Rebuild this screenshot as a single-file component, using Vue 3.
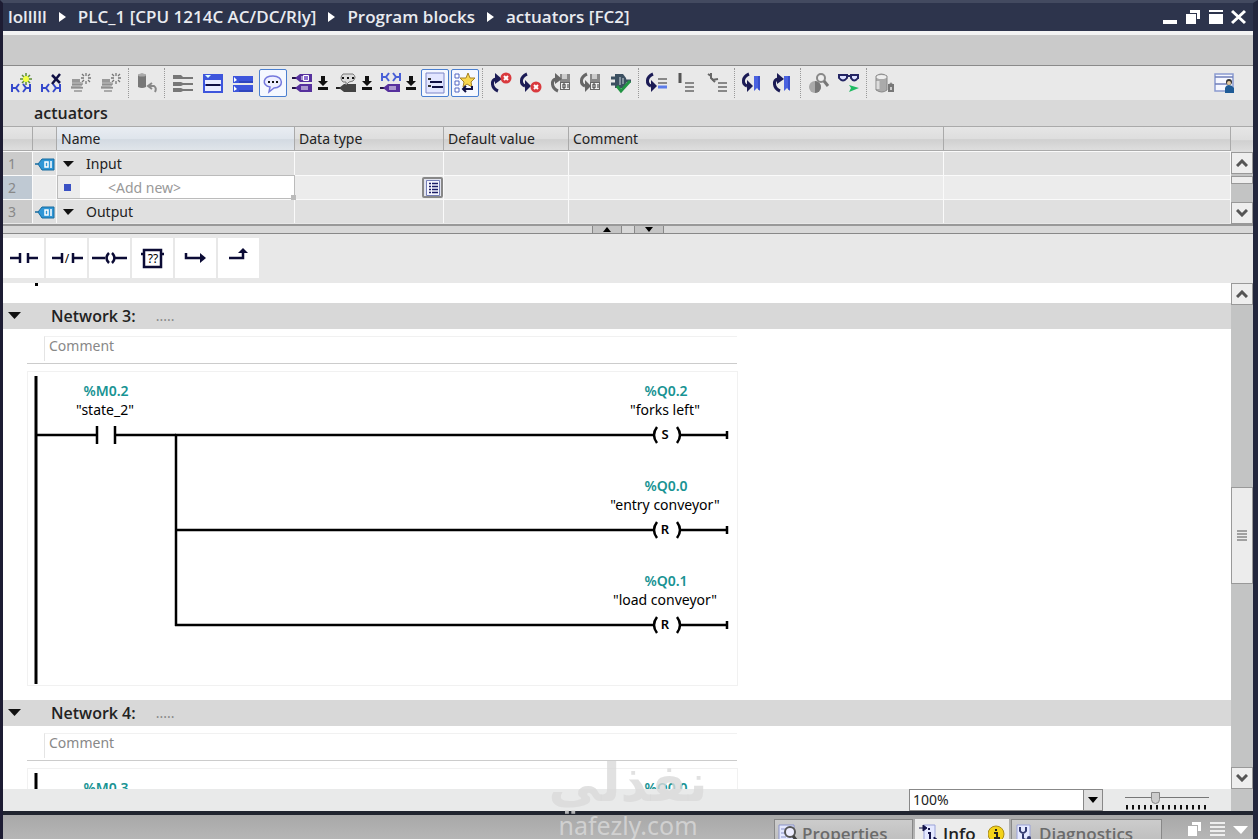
<script setup>
import { ref } from "vue";

const crumbs = ["lolllll", "PLC_1 [CPU 1214C AC/DC/Rly]", "Program blocks", "actuators [FC2]"];

const zoom = ref("100%");
const slider = ref(35);

// Shared pieces of the toolbar glyphs, all on a 20x20 grid
const contacts = (y, c) =>
  `<path d="M1 ${y}v8M1 ${y + 4}h4M8 ${y}l-3 4 3 4M12 ${y}l3 4-3 4M15 ${y + 4}h4M19 ${y}v8" fill="none" stroke="${c}" stroke-width="2"/>`;
const tag = (y, c) =>
  `<path d="M-1 ${y + 4}h6" stroke="#221244" stroke-width="2"/><path d="M2 ${y + 4}l5-4h12v8H7z" fill="${c}"/><path d="M8 ${y + 3}h7M8 ${y + 5}h7" stroke="#fff"/>`;
const rays = `<path d="M15 0v3M15 8v3M10 5h3M17 5h3M11 1l2 2M17 7l2 2M19 1l-2 2M11 9l2-2" stroke="#777" stroke-width="1.3"/>`;
const rows = `<path d="M1 6h8v3H1z" fill="#999"/><path d="M1 9h9l2 1v2H1zM0 13h9l3 1v1H0zM3 17h8v2H3z" fill="#aaa"/><path d="M1 12h10M0 15h12" stroke="#777"/>`;
const redX = (x, y) =>
  `<circle cx="${x}" cy="${y}" r="5.500" fill="#d93a3e"/><path d="M${x - 2} ${y - 2}l4 4m0-4l-4 4" stroke="#fff" stroke-width="2"/>`;
const up = (c) =>
  `<path d="M7 18C0 15 0 7 5 6" fill="none" stroke="${c}" stroke-width="3"/><path d="M4 0l7 6-7 5z" fill="${c}"/>`;
const down = (c) =>
  `<path d="M6 1C-1 4-1 11 4 13" fill="none" stroke="${c}" stroke-width="3"/><path d="M4 7l6 6-6 6z" fill="${c}"/>`;
const disk = `<path d="M9 1h10v16H9z" fill="#888"/><path d="M11 1h5v5h-5z" fill="#ccc"/><path d="M9 9h10v8H9z" fill="#666"/><path d="M10 10h8v6h-8z" fill="#eee"/><path d="M12 11h2v4h-2zM17 11v4" fill="none" stroke="#333"/>`;
const flag = `<path d="M11 3h6v15l-3-3-3 3z" fill="#4a62e0"/><path d="M16 3v14" stroke="#243bb5"/>`;
const lines = (x, y, c = "#888") =>
  `<path d="M${x} ${y}h9M${x} ${y + 4}h9M${x} ${y + 8}h9" stroke="${c}" stroke-width="2"/>`;

const icons = {
  insertNetwork:
    contacts(11, "#3448cc") +
    `<path d="M15 0v12M9 6h12M11 2l8 8M19 2l-8 8" stroke="#5c8f35" stroke-width="1.5"/><circle cx="15" cy="6" r="3" fill="#f2ff45"/>`,
  deleteNetwork: contacts(11, "#3448cc") + `<path d="M11 2l8 8M19 1l-8 10" stroke="#101044" stroke-width="2.5"/>`,
  insertRow: rows + rays,
  addRow: rows + rays,
  reset: `<path d="M1 2q4-3 8 0v12q-4 2-8 0z" fill="#777"/><ellipse cx="5" cy="2" rx="4" ry="1.5" fill="#aaa"/><path d="M12 13h5q3 2 1 6M15 10l-4 3 4 3" fill="none" stroke="#888" stroke-width="2"/>`,
  rows: `<path d="M0 2h8l2 2h10v2H10L8 6H0zM0 9h8l2 1h10v2H10L8 13H0zM0 15h8l2 1h10v2H10L8 19H0z" fill="#777"/>`,
  openAll: `<path d="M0 1h20v19H0z" fill="#3d55dc"/><path d="M2 2h6l-3 3z" fill="#dff"/><path d="M2 7h16v4H2zM2 13h16v5H2z" fill="#e9ecff"/><path d="M3 12h14" stroke="#101044" stroke-width="2"/>`,
  closeAll: `<path d="M0 3h20v7H0zM0 12h20v7H0z" fill="#3d55dc"/><path d="M1 4l3 3-3 2zM1 13l3 3-3 2z" fill="#fff"/><path d="M6 9h14M6 18h14" stroke="#20369f"/>`,
  comment: `<path d="M10 3c11 0 11 12 1 12l-5 4 1-5C-2 12 0 3 10 3z" fill="#eeefff" stroke="#7478dd" stroke-width="1.5"/><path d="M5 8h2v2H5zM9 8h2v2H9zM13 8h2v2h-2z" fill="#111"/>`,
  operands: tag(1, "#56309d") + tag(11, "#56309d") + `<path d="M10.500 2.500h5v5h-5z" fill="#8b6cd0" stroke="#fff"/>`,
  tagInfo: `<path d="M-1 15h6" stroke="#222" stroke-width="2"/><path d="M2 15l5-4h12v8H7z" fill="#444"/><path d="M6 1h10q4 3 0 7l-4 1-3 3V9H6q-4-4 0-8z" fill="#ddd" stroke="#777"/><path d="M5 4h2v2H5zM10 4h2v2h-2zM15 4h2v2h-2z" fill="#111"/>`,
  symbols: contacts(0, "#4960d7") + tag(11, "#56309d"),
  networkComments: `<path d="M1 0h18v20H1z" fill="#e3e6ff" stroke="#7d86c8"/><path d="M3 6h3M3 13h3" stroke="#333" stroke-width="2"/><path d="M5 9h12M7 14h11" stroke="#101044" stroke-width="2"/>`,
  favorites: `<path d="M0 1h4v4H0zM0 8h4v4H0zM0 15h4v4H0z" fill="#fff" stroke="#5367c2"/><path d="M13 0l2 5h5l-4 4 1 5-5-3-4 3 1-5-4-4h6z" fill="#f9d74f" stroke="#a68225"/><path d="M17 13v3H9M11 13l-3 3 3 3" fill="none" stroke="#101044" stroke-width="2"/>`,
  prevError: up("#1b1b55") + redX(15, 5),
  nextError: down("#1b1b55") + redX(15, 14),
  upload: disk + up("#666"),
  download: disk + down("#666"),
  consistency: `<path d="M0 5h5M0 11h5M15 8h5" stroke="#3c5061" stroke-width="3"/><path d="M4 1h8q7 7 0 14H4z" fill="#3c5061"/><path d="M9 4v8M12 5v6" stroke="#cdd7dd"/><path d="M6 13l4 5 9-10" fill="none" stroke="#229444" stroke-width="3"/>`,
  goto: down("#1b1b55") + lines(11, 6) + `<path d="M11 14h9" stroke="#5b7bea" stroke-width="3"/>`,
  absolute: `<path d="M3 0v10" stroke="#555" stroke-width="3"/>` + lines(8, 10),
  relative: `<path d="M1 1l3 2M4 0v5l4 4M5 7l6-1" fill="none" stroke="#666" stroke-width="2"/>` + lines(11, 10),
  nextMark: down("#1b1b55") + flag,
  prevMark: up("#1b1b55") + flag,
  inspect: `<circle cx="6" cy="14" r="6" fill="#aaa"/><path d="M6 8a6 6 0 010 12z" fill="#777"/><circle cx="12" cy="5" r="4" fill="#eee" stroke="#888" stroke-width="2"/><path d="M15 8l4 5" stroke="#777" stroke-width="3"/>`,
  monitor: `<path d="M0 2h8v3q-4 5-8 0zM12 2h7v3q-4 5-7 0zM8 3h4M19 2v4" fill="#dce0ff" stroke="#242564" stroke-width="2"/><path d="M10 12l10 3-10 4 2-4z" fill="#20bb62"/>`,
  snapshot: `<path d="M1 3q5-4 11 0v14q-5 4-11 0z" fill="#aaa" stroke="#888"/><ellipse cx="6.5" cy="4" rx="5" ry="2" fill="#eee"/><path d="M3 8v8" stroke="#ddd" stroke-width="3"/><path d="M13 11h6v8h-6z" fill="#777"/><path d="M14 12q2-4 4 0" fill="none" stroke="#777"/><path d="M15 14h2v3h-2z" fill="#ccc"/>`,
};

const toolGroups = [
  [{ icon: "insertNetwork" }, { icon: "deleteNetwork" }, { icon: "insertRow" }, { icon: "addRow" }],
  [{ icon: "reset" }],
  [
    { icon: "rows" },
    { icon: "openAll" },
    { icon: "closeAll" },
    { icon: "comment", on: true },
    { icon: "operands", menu: true },
    { icon: "tagInfo", menu: true },
    { icon: "symbols", menu: true },
    { icon: "networkComments", on: true },
    { icon: "favorites", on: true },
  ],
  [{ icon: "prevError" }, { icon: "nextError" }, { icon: "upload" }, { icon: "download" }, { icon: "consistency" }],
  [{ icon: "goto" }, { icon: "absolute" }, { icon: "relative" }],
  [{ icon: "nextMark" }, { icon: "prevMark" }],
  [{ icon: "inspect" }, { icon: "monitor" }],
  [{ icon: "snapshot" }],
];

const palette = [
  { name: "Normally open contact", line: "M1 10h10M11 5v10M19 5v10M19 10h10" },
  { name: "Normally closed contact", line: "M0 10h10M10 5v10M21 5v10M21 10h10", label: "/" },
  { name: "Assignment", line: "M-3 10h13M14 5q-5 5 0 10M17 5q5 5 0 10M20 10h12" },
  { name: "Empty box", line: "M6 2h17v17H6zM3 6h3M23 6h3", label: "??" },
  { name: "Open branch", line: "M5 5v5h15", head: "M19 5l6 5-6 5z" },
  { name: "Close branch", line: "M5 10h14V3", head: "M14 5l5-5 5 5z" },
];

const networks = [
  {
    title: "Network 3:",
    contact: { address: "%M0.2", name: '"state_2"' },
    coils: [
      { address: "%Q0.2", name: '"forks left"', type: "S" },
      { address: "%Q0.0", name: '"entry conveyor"', type: "R" },
      { address: "%Q0.1", name: '"load conveyor"', type: "R" },
    ],
  },
  {
    title: "Network 4:",
    contact: { address: "%M0.3" },
    coils: [{ address: "%Q0.0" }],
  },
];

const rungY = (i) => 63 + i * 95;
</script>

<template>
  <div class="window">
    <header class="titlebar">
      <nav class="crumbs">
        <template v-for="(crumb, i) in crumbs" :key="crumb">
          <svg v-if="i" width="7" height="10"><path d="M0 0l7 5-7 5z" fill="#fff" /></svg>
          <a href="#">{{ crumb }}</a>
        </template>
      </nav>
      <div class="winButtons">
        <button aria-label="Minimize">
          <svg width="16" height="16"><path d="M1 11h14v4H1z" fill="#fff" /></svg>
        </button>
        <button aria-label="Restore">
          <svg width="16" height="16">
            <path d="M5 1h10v9h-3V4H5z" fill="#fff" />
            <path d="M1 5h10v10H1z" fill="#fff" />
          </svg>
        </button>
        <button aria-label="Maximize">
          <svg width="16" height="16"><path d="M1 1h14v2H1zM1 5h14v10H1z" fill="#fff" /></svg>
        </button>
        <button aria-label="Close">
          <svg width="16" height="16"><path d="M1 2l13 12M14 2L1 14" stroke="#fff" stroke-width="3" /></svg>
        </button>
      </div>
    </header>
    <div class="band"></div>

    <div class="toolbar">
      <div v-for="(group, g) in toolGroups" :key="g" class="toolGroup">
        <template v-for="tool in group" :key="tool.icon">
          <button class="tool" :class="{ on: tool.on }" :aria-label="tool.icon">
            <svg width="20" height="20" overflow="visible" v-html="icons[tool.icon]"></svg>
          </button>
          <button v-if="tool.menu" class="toolMenu" :aria-label="tool.icon + ' menu'">
            <svg width="10" height="14">
              <path d="M3 0h4v5h3l-5 5-5-5h3zM0 11h10v3H0z" fill="#111" />
            </svg>
          </button>
        </template>
      </div>
      <button class="tool layout" aria-label="Layout">
        <svg width="20" height="20">
          <path d="M1 1h18v17H1z" fill="#f5f7ff" stroke="#8a9bd0" stroke-width="1.5" />
          <path d="M1 4h18M1 11h12" stroke="#6f7fba" stroke-width="1.5" />
          <circle cx="15" cy="9" r="3" fill="#333" />
          <circle cx="15" cy="10" r="2" fill="#e5c9a0" />
          <path d="M11 20v-5q1-3 4-3t5 3v5z" fill="#1f5b96" />
        </svg>
      </button>
    </div>

    <h1 class="blockName">actuators</h1>

    <section class="interface">
      <table>
        <colgroup>
          <col class="colNo" />
          <col class="colIcon" />
          <col class="colName" />
          <col class="colType" />
          <col class="colDefault" />
          <col class="colComment" />
          <col />
        </colgroup>
        <thead>
          <tr>
            <th></th>
            <th></th>
            <th class="nameHead">Name</th>
            <th>Data type</th>
            <th>Default value</th>
            <th>Comment</th>
            <th></th>
          </tr>
        </thead>
        <tbody>
          <tr v-for="(label, i) in ['Input', null, 'Output']" :key="i" :class="{ active: !label }">
            <td class="rowNo">{{ i + 1 }}</td>
            <td class="rowIcon">
              <svg v-if="label" width="20" height="14">
                <path d="M0 7h3l4-5h12v11H7L3 7z" fill="#2f96d6" stroke="#176a9e" />
                <path d="M10 5h3v5h-3zM16 4v7" fill="none" stroke="#fff" stroke-width="1.5" />
              </svg>
            </td>
            <td v-if="label">
              <div class="nameCell">
                <svg width="12" height="8"><path d="M1 1h11L6 7z" fill="#111" /></svg>
                <span>{{ label }}</span>
              </div>
            </td>
            <td v-else class="addCell">
              <div class="addRow">
                <i class="bullet"></i>
                <input aria-label="Name" placeholder="<Add new>" />
              </div>
            </td>
            <td>
              <button v-if="!label" class="pick" aria-label="Choose data type">
                <svg width="16" height="16">
                  <path d="M1.500 0.500h13v15h-13z" fill="#f5f6ff" stroke="#767fb7" />
                  <path
                    d="M4 3.500h2M4 6.500h2M4 9.500h2M4 12.500h2M7 3.500h6M7 6.500h6M7 9.500h6M7 12.500h6"
                    stroke="#1c1e66"
                    stroke-width="1.5"
                  />
                </svg>
              </button>
            </td>
            <td></td>
            <td></td>
            <td></td>
          </tr>
        </tbody>
      </table>
      <div class="side">
        <div class="sideHead"></div>
        <div class="scroll">
          <button class="scrollBtn" aria-label="Scroll up">
            <svg width="12" height="8"><path d="M1 7l5-5 5 5" /></svg>
          </button>
          <div class="smallThumb"></div>
          <button class="scrollBtn last" aria-label="Scroll down">
            <svg width="12" height="8"><path d="M1 1l5 5 5-5" /></svg>
          </button>
        </div>
      </div>
    </section>

    <div class="splitter">
      <button aria-label="Collapse"><svg width="8" height="5"><path d="M0 5h8L4 0z" /></svg></button>
      <button aria-label="Expand"><svg width="8" height="5"><path d="M0 0h8L4 5z" /></svg></button>
    </div>

    <div class="palette">
      <button v-for="item in palette" :key="item.name" :aria-label="item.name">
        <svg width="29" height="21" overflow="visible">
          <path :d="item.line" fill="none" stroke="#0b0b35" stroke-width="2.5" />
          <path v-if="item.head" :d="item.head" fill="#0b0b35" />
          <text v-if="item.label" x="15" y="15" class="glyph">{{ item.label }}</text>
        </svg>
      </button>
    </div>

    <main class="editor">
      <div class="editorMain">
        <div class="canvas">
          <div class="previous"></div>
          <section v-for="net in networks" :key="net.title" class="network">
            <header>
              <svg width="13" height="8"><path d="M0 0h13L6.500 7z" fill="#111" /></svg>
              <h2>{{ net.title }}</h2>
              <span class="dots">.....</span>
            </header>
            <div class="note"><p>Comment</p></div>
            <svg class="ladder" width="711" height="315">
              <g fill="none" stroke="#000" stroke-width="2.5">
                <path d="M8 4V312" stroke-width="3" />
                <path d="M8 63H69M69 54v18M87 54v18M87 63h61" />
                <path v-if="net.coils.length > 1" :d="`M148 63V${rungY(net.coils.length - 1) + 1}`" />
                <path
                  v-for="(coil, i) in net.coils"
                  :key="coil.address"
                  :d="`M147 ${rungY(i)}H625M629 ${rungY(i) - 8}q-6 8 0 16M649 ${rungY(i) - 8}q6 8 0 16M652 ${rungY(i)}H699M699 ${rungY(i) - 4}v8`"
                />
              </g>
              <text x="78" y="24" class="address">{{ net.contact.address }}</text>
              <text v-if="net.contact.name" x="77" y="43">{{ net.contact.name }}</text>
              <template v-for="(coil, i) in net.coils" :key="coil.address">
                <text x="638" :y="rungY(i) - 39" class="address">{{ coil.address }}</text>
                <text v-if="coil.name" x="637" :y="rungY(i) - 20">{{ coil.name }}</text>
                <text v-if="coil.type" x="637" :y="rungY(i) + 4" class="coilType">{{ coil.type }}</text>
              </template>
            </svg>
          </section>
        </div>
        <div class="status">
          <div class="combo">
            <select v-model="zoom" aria-label="Zoom">
              <option>50%</option>
              <option>100%</option>
              <option>200%</option>
            </select>
            <span class="comboArrow"><svg width="10" height="6"><path d="M0 0h10L5 6z" /></svg></span>
          </div>
          <div class="slider">
            <input v-model="slider" type="range" min="0" max="100" aria-label="Zoom level" />
            <svg width="84" height="5">
              <path d="M1 2H84" stroke="#111" stroke-width="5" stroke-dasharray="2 4" />
            </svg>
          </div>
        </div>
      </div>
      <div class="scroll">
        <button class="scrollBtn" aria-label="Scroll up">
          <svg width="12" height="8"><path d="M1 7l5-5 5 5" /></svg>
        </button>
        <div class="before"></div>
        <div class="thumb"><svg width="10" height="11"><path d="M0 1h10M0 4h10M0 7h10M0 10h10" /></svg></div>
        <div class="after"></div>
        <button class="scrollBtn" aria-label="Scroll down">
          <svg width="12" height="8"><path d="M1 1l5 5 5-5" /></svg>
        </button>
        <div class="corner"></div>
      </div>
    </main>

    <footer class="inspector">
      <button class="tab properties">
        <svg width="20" height="20">
          <path d="M1 1h15v18H1z" fill="#e4e8ff" stroke="#8a93c8" />
          <path d="M3 5h5M3 9h4M3 13h5" stroke="#8a93c8" />
          <circle cx="12" cy="8" r="5" fill="#eef" stroke="#555" stroke-width="2" />
          <path d="M15 12l4 5" stroke="#444" stroke-width="3" />
        </svg>
        Properties
      </button>
      <button class="tab info">
        <svg width="20" height="20">
          <path d="M5 1h11v18H5z" fill="#e4e8ff" stroke="#9aa2d8" />
          <path d="M0 4h5M4 1l4 3-4 3zM12 16h5M15 13l4 3-4 3z" fill="#14144a" stroke="#14144a" />
          <path d="M9 9h2v7M8 16h5M10 4v2" fill="none" stroke="#14144a" stroke-width="2" />
        </svg>
        Info
        <svg class="badge" width="17" height="18">
          <circle cx="8" cy="9" r="8" fill="#f3d21a" stroke="#a98c1b" />
          <path d="M6 8h3v5M6 13h6M8 4v2" fill="none" stroke="#222" stroke-width="2" />
        </svg>
      </button>
      <button class="tab diagnostics">
        <svg width="20" height="20">
          <path d="M2 1h13v18H2z" fill="#e4e8ff" stroke="#9aa2d8" />
          <path d="M5 3v4q3 4 6 0V3M8 9v5q2 3 5 1" fill="none" stroke="#333a70" stroke-width="2" />
          <circle cx="14" cy="14" r="2" fill="#333a70" />
        </svg>
        Diagnostics
      </button>
      <div class="paneButtons">
        <button aria-label="Float">
          <svg width="15" height="15"><path d="M5 0h9v9h-3V3H5zM1 4h9v10H1z" fill="#fff" /></svg>
        </button>
        <button aria-label="Split">
          <svg width="15" height="15">
            <path d="M0 1h15M0 5h15M0 9h15M0 13h15" stroke="#eee" stroke-width="2" />
          </svg>
        </button>
        <button aria-label="Collapse pane">
          <svg width="15" height="15"><path d="M0 4h15l-7 8z" fill="#fff" /></svg>
        </button>
      </div>
    </footer>

    <div class="watermark">
      <span class="arabic" lang="ar">نفذلي</span>
      <span>nafezly.com</span>
    </div>
  </div>
</template>

<style>
body {
  background: #1f2438;
  margin: 0;
}
</style>

<style scoped>
* {
  box-sizing: border-box;
}

.window {
  background: #e8e8e8;
  border-left: 3px solid #1d1c33;
  border-right: 5px solid #23273d;
  border-top: 3px solid #434a60;
  color: #222;
  display: flex;
  flex-direction: column;
  font: 14px/20px "Noto Sans", "Open Sans", sans-serif;
  height: 100vh;
  overflow: hidden;
  position: relative;
}

button {
  align-items: center;
  background: none;
  border: 0;
  color: inherit;
  display: flex;
  flex: none;
  font: inherit;
  justify-content: center;
  padding: 0;
}

svg {
  display: block;
  flex: none;
}

.titlebar {
  align-items: center;
  background: #2d344c;
  display: flex;
  flex: none;
  height: 28px;
  justify-content: space-between;
  padding: 0 6px 0 5px;
}

.crumbs {
  align-items: center;
  display: flex;
  font: 600 17px/24px "Open Sans", "Noto Sans", sans-serif;
  gap: 12px;
}

.crumbs a {
  color: #e9ebf0;
  text-decoration: none;
  white-space: nowrap;
}

.winButtons {
  display: flex;
  gap: 7px;
}

.band {
  background: #cacaca;
  border-bottom: 1px solid #8a8a8a;
  border-top: 4px solid #f3f3f3;
  flex: none;
  height: 35px;
}

.toolbar {
  align-items: center;
  background: #e9e9e9;
  display: flex;
  flex: none;
  height: 34px;
  padding: 0 14px 0 3px;
}

.toolGroup {
  align-items: center;
  display: flex;
}

.toolGroup + .toolGroup::before {
  border-left: 1px dotted #999;
  content: "";
  height: 30px;
  margin: 0 3px 0 2px;
}

.tool {
  height: 28px;
  width: 30px;
}

.tool.on {
  background: #f5f8ff;
  border: 1px solid #4a7fd0;
  border-radius: 2px;
  margin: 0 1px;
  width: 28px;
}

.toolMenu {
  height: 28px;
  justify-content: flex-start;
  width: 14px;
}

.layout {
  margin-left: auto;
}

.blockName {
  background: #d9d9d9;
  flex: none;
  font: 600 16px/26px "Open Sans", "Noto Sans", sans-serif;
  margin: 0;
  padding-left: 31px;
}

.interface {
  border-bottom: 2px solid #999;
  border-top: 1px solid #aaa;
  display: flex;
  flex: none;
  height: 100px;
  overflow: hidden;
}

table {
  align-self: flex-start;
  border-collapse: separate;
  border-spacing: 0;
  flex: 1;
  table-layout: fixed;
  width: 0;
}

.colNo {
  width: 30px;
}

.colIcon {
  width: 24px;
}

.colName {
  width: 238px;
}

.colType {
  width: 149px;
}

.colDefault {
  width: 125px;
}

.colComment {
  width: 375px;
}

th {
  background: linear-gradient(#e6e6e6, #dedede 50%, #d0d0d0 55%, #dedede);
  border-bottom: 1px solid #aaa;
  border-right: 1px solid #aaa;
  font-weight: 400;
  height: 24px;
  line-height: 20px;
  padding: 0 4px;
  text-align: left;
}

.nameHead {
  background: linear-gradient(#e9edf2, #dfe5ec 50%, #d3dae2 55%, #e0e5ea);
}

td {
  background: #e0e0e0;
  border-right: 1px solid #fafafa;
  border-top: 1px solid #fafafa;
  height: 24px;
  line-height: 20px;
  padding: 0;
}

.rowNo {
  background: #cbcbcb;
  color: #888;
  padding-left: 5px;
}

.rowIcon svg {
  margin-left: 2px;
}

.active td {
  background: #ececec;
}

.active .rowNo {
  background: #bfc9d3;
}

.nameCell {
  align-items: center;
  display: flex;
  gap: 12px;
  padding-left: 5px;
}

.active .addCell {
  border: 1px solid #bbb;
  position: relative;
}

.addCell::after {
  background: #bbb;
  bottom: -2px;
  content: "";
  height: 5px;
  position: absolute;
  right: -2px;
  width: 5px;
}

.addRow {
  align-items: center;
  display: flex;
}

.bullet {
  background: #3a51c4;
  height: 7px;
  margin: 0 9px 0 6px;
  width: 7px;
}

.addRow input {
  background: #fff;
  border: 0;
  flex: 1;
  font: inherit;
  height: 22px;
  min-width: 0;
  padding: 0 0 0 28px;
}

.addRow input::placeholder {
  color: #999;
  opacity: 1;
}

.pick {
  background: #e1e3ef;
  border: 2px solid #888;
  border-radius: 2px;
  height: 21px;
  margin-left: auto;
  width: 21px;
}

.side {
  display: flex;
  flex-direction: column;
  width: 22px;
}

.sideHead {
  background: linear-gradient(#e6e6e6, #dedede 50%, #d0d0d0 55%, #dedede);
  flex: none;
  height: 25px;
}

.scroll {
  background: #c3c4c4;
  display: flex;
  flex: 1;
  flex-direction: column;
}

.scrollBtn {
  background: #eee;
  border: 1px solid #999;
  height: 22px;
  width: 22px;
}

.scrollBtn path {
  fill: none;
  stroke: #555;
  stroke-width: 3;
}

.scrollBtn.last {
  margin-top: auto;
}

.smallThumb {
  background: #eee;
  border: 1px solid #999;
  height: 8px;
  margin-top: 2px;
}

.splitter {
  background: #d8d8d8;
  border-bottom: 1px solid #888;
  display: flex;
  flex: none;
  gap: 12px;
  height: 8px;
  justify-content: center;
}

.splitter button {
  background: #c4c4c4;
  border: 1px solid #888;
  border-bottom: 0;
  border-top: 0;
  height: 7px;
  width: 30px;
}

.palette {
  display: flex;
  flex: none;
  gap: 2px;
  height: 49px;
  padding-top: 4px;
}

.palette button {
  background: #fff;
  height: 40px;
  width: 41px;
}

text {
  font: 14px "Noto Sans", "Open Sans", sans-serif;
  text-anchor: middle;
}

.glyph {
  font-size: 12px;
}

.editor {
  display: flex;
  flex: 1;
  min-height: 0;
}

.editorMain {
  background: #fff;
  display: flex;
  flex: 1;
  flex-direction: column;
  min-width: 0;
}

.canvas {
  flex: 1;
  min-height: 0;
  overflow: hidden;
}

.previous {
  height: 20px;
}

.previous::before {
  background: #000;
  content: "";
  display: block;
  height: 3px;
  margin-left: 32px;
  width: 3px;
}

.network {
  padding-bottom: 14px;
}

.network header {
  align-items: center;
  background: #d8d8d8;
  display: flex;
  height: 26px;
  padding-left: 5px;
}

h2 {
  font: 600 16px/24px "Open Sans", "Noto Sans", sans-serif;
  margin: 0 20px 0 30px;
}

.dots {
  color: #888;
}

.note {
  border-bottom: 1px solid #ccc;
  margin-left: 24px;
  max-width: 710px;
  padding: 7px 0 2px 17px;
}

.note p {
  border-left: 1px solid #e4e4e4;
  border-top: 1px solid #f1f1f1;
  color: #888;
  height: 25px;
  line-height: 18px;
  margin: 0;
  padding-left: 4px;
}

.ladder {
  border: 1px solid #f1f1f1;
  margin: 7px 0 0 24px;
}

.address {
  fill: #189393;
  font-weight: 600;
}

.coilType {
  font-size: 13px;
  font-weight: 600;
}

.status {
  align-items: center;
  background: #e9eaea;
  display: flex;
  flex: none;
  gap: 22px;
  height: 22px;
  justify-content: flex-end;
  padding-right: 22px;
}

.combo {
  border: 1px solid #888;
  display: flex;
  height: 22px;
  position: relative;
  width: 194px;
}

.combo select {
  appearance: none;
  background: #fff;
  border: 0;
  color: #222;
  flex: 1;
  font: inherit;
  padding: 0 3px;
}

.comboArrow {
  align-items: center;
  background: #dedede;
  border-left: 1px solid #888;
  display: flex;
  inset: 0 0 0 auto;
  justify-content: center;
  pointer-events: none;
  position: absolute;
  width: 19px;
}

.slider {
  width: 84px;
}

.slider input {
  appearance: none;
  background: linear-gradient(#777, #777) center / 100% 1px no-repeat;
  display: block;
  height: 15px;
  margin: 0;
  width: 100%;
}

.slider input::-webkit-slider-thumb {
  appearance: none;
  background: #ccc;
  border: 1px solid #888;
  border-radius: 0 0 5px 5px;
  height: 12px;
  width: 9px;
}

.editor .scroll {
  flex: none;
  width: 22px;
}

.before {
  flex: 182;
}

.after {
  flex: 183;
}

.thumb {
  align-items: center;
  background: #ececec;
  border: 1px solid #999;
  display: flex;
  flex: 96;
  justify-content: center;
}

.thumb path {
  stroke: #555;
}

.corner {
  height: 22px;
}

.inspector {
  background: linear-gradient(#a8a8a8, #b6b6b6);
  border-top: 4px solid #20242f;
  display: flex;
  flex: none;
  gap: 2px;
  height: 28px;
  justify-content: flex-end;
  overflow: hidden;
  padding: 4px 5px 0 0;
}

.tab {
  background: linear-gradient(#ccc, #bbb);
  border: 1px solid #888;
  border-bottom: 0;
  color: #6b6b6b;
  font: 600 17px/26px "Open Sans", "Noto Sans", sans-serif;
  gap: 4px;
  height: 28px;
  justify-content: flex-start;
  padding-left: 3px;
}

.properties {
  width: 139px;
}

.info {
  background: #ececec;
  border-color: #ececec;
  color: #222;
  width: 94px;
}

.badge {
  margin-left: 8px;
}

.diagnostics {
  width: 151px;
}

.paneButtons {
  display: flex;
  gap: 8px;
  height: 20px;
  margin-left: 23px;
}

.watermark {
  align-items: center;
  bottom: 0;
  color: #dadadacc;
  display: flex;
  flex-direction: column;
  font: 25px/28px "Noto Sans", sans-serif;
  left: 50%;
  pointer-events: none;
  position: absolute;
  transform: translateX(-50%);
}

.arabic {
  font: bold 52px/56px "DejaVu Sans", sans-serif;
}
</style>
